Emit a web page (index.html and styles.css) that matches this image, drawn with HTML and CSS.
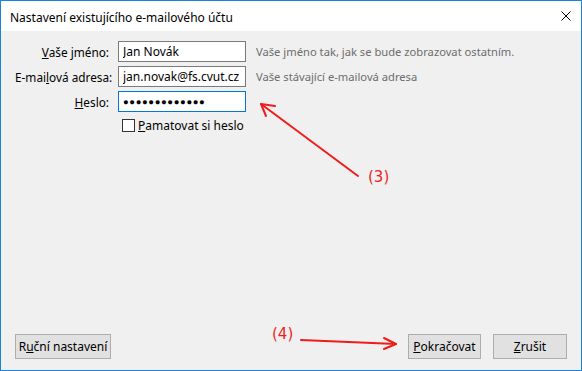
FILE: index.html
```html
<!DOCTYPE html>
<html lang="cs">
<head>
    <meta charset="UTF-8">
    <title>Nastavení existujícího e-mailového účtu</title>
    <link rel="stylesheet" href="styles.css">
</head>
<body>
    <div class="window">
        <div class="titlebar">
            <span class="title">Nastavení existujícího e-mailového účtu</span>
            <svg class="close" width="10" height="10" viewBox="0 0 10 10">
                <path d="M0.5 0.5 L9.5 9.5 M9.5 0.5 L0.5 9.5" stroke="#000" stroke-width="1" fill="none"/>
            </svg>
        </div>

        <div class="content">
            <form class="account-form">
                <label class="label" for="name"><u>V</u>aše jméno:</label>
                <input class="field" id="name" type="text" value="Jan Novák">
                <span class="hint">Vaše jméno tak, jak se bude zobrazovat ostatním.</span>

                <label class="label" for="email">E-mai<u>l</u>ová adresa:</label>
                <input class="field" id="email" type="text" value="jan.novak@fs.cvut.cz">
                <span class="hint">Vaše stávající e-mailová adresa</span>

                <label class="label" for="password"><u>H</u>eslo:</label>
                <div class="field focused password" id="password">●●●●●●●●●●●●●</div>
                <span class="hint"></span>

                <span></span>
                <label class="remember"><span class="checkbox"></span><u>P</u>amatovat si heslo</label>
                <span></span>
            </form>

            <div class="buttons">
                <button type="button" class="btn">R<u>u</u>ční nastavení</button>
                <div class="spacer"></div>
                <button type="button" class="btn btn-continue"><u>P</u>okračovat</button>
                <button type="button" class="btn btn-cancel"><u>Z</u>rušit</button>
            </div>
        </div>

        <!-- annotations drawn over the dialog -->
        <svg class="marks" width="582" height="371" viewBox="0 0 582 371">
            <g stroke="#f01c1c" stroke-width="2" fill="none" stroke-linecap="round">
                <path d="M358 176 L261 104"/>
                <path d="M261 104 L275 106 M261 104 L266 116"/>
                <path d="M301 340 L396 344"/>
                <path d="M396 344 L384 338 M396 344 L384 349"/>
            </g>
        </svg>
        <span class="note note-3">(3)</span>
        <span class="note note-4">(4)</span>
    </div>
</body>
</html>
```

FILE: styles.css
```css
body { margin: 0; background: #ffffff; font-family: 'Noto Sans', sans-serif; font-size: 12px; color: #000; }
.window { position: relative; width: 580px; height: 369px; border: 1px solid #1883d7; background: #f0f0f0; display: flex; flex-direction: column; }
.titlebar { height: 30px; background: #ffffff; display: flex; align-items: center; justify-content: space-between; padding: 0 10px 0 9px; }
.title { font-size: 12px; position: relative; top: 1px; }
.content { flex: 1; display: flex; flex-direction: column; padding: 10px 14px 11px 14px; }
.account-form { display: grid; grid-template-columns: 94px 128px auto; grid-auto-rows: 21px; column-gap: 9px; row-gap: 4px; align-items: center; }
.label { text-align: right; white-space: nowrap; font-size: 11.8px; }
.field { box-sizing: border-box; height: 21px; width: 128px; margin: 0; border: 1px solid #7a7a7a; background: #fff; padding: 0 4px; font-family: inherit; font-size: 12px; color: #000; outline: none; }
.focused { border-color: #0078d7; }
.password { display: flex; align-items: center; font-size: 9.5px; letter-spacing: 0.6px; }
.hint { color: #6d6d6d; white-space: nowrap; padding-left: 1px; font-size: 11.2px; }
.remember { display: flex; align-items: center; padding-left: 4px; margin-top: -2px; white-space: nowrap; }
.checkbox { width: 11px; height: 11px; border: 1px solid #333; background: #fff; margin-right: 3px; }
.buttons { margin-top: auto; display: flex; gap: 12px; }
.spacer { flex: 1; }
.btn { height: 25px; padding: 0; border: 1px solid #adadad; background: #e1e1e1; font-family: inherit; font-size: 12px; color: #000; }
.btn:first-child { width: 96px; }
.btn-continue { width: 73px; }
.btn-cancel { width: 74px; }
.marks { position: absolute; left: -1px; top: -1px; pointer-events: none; }
.note { position: absolute; color: #f01c1c; font-family: 'DejaVu Sans', sans-serif; font-size: 15px; }
.note-3 { left: 367px; top: 167px; }
.note-4 { left: 271px; top: 324px; }
```
